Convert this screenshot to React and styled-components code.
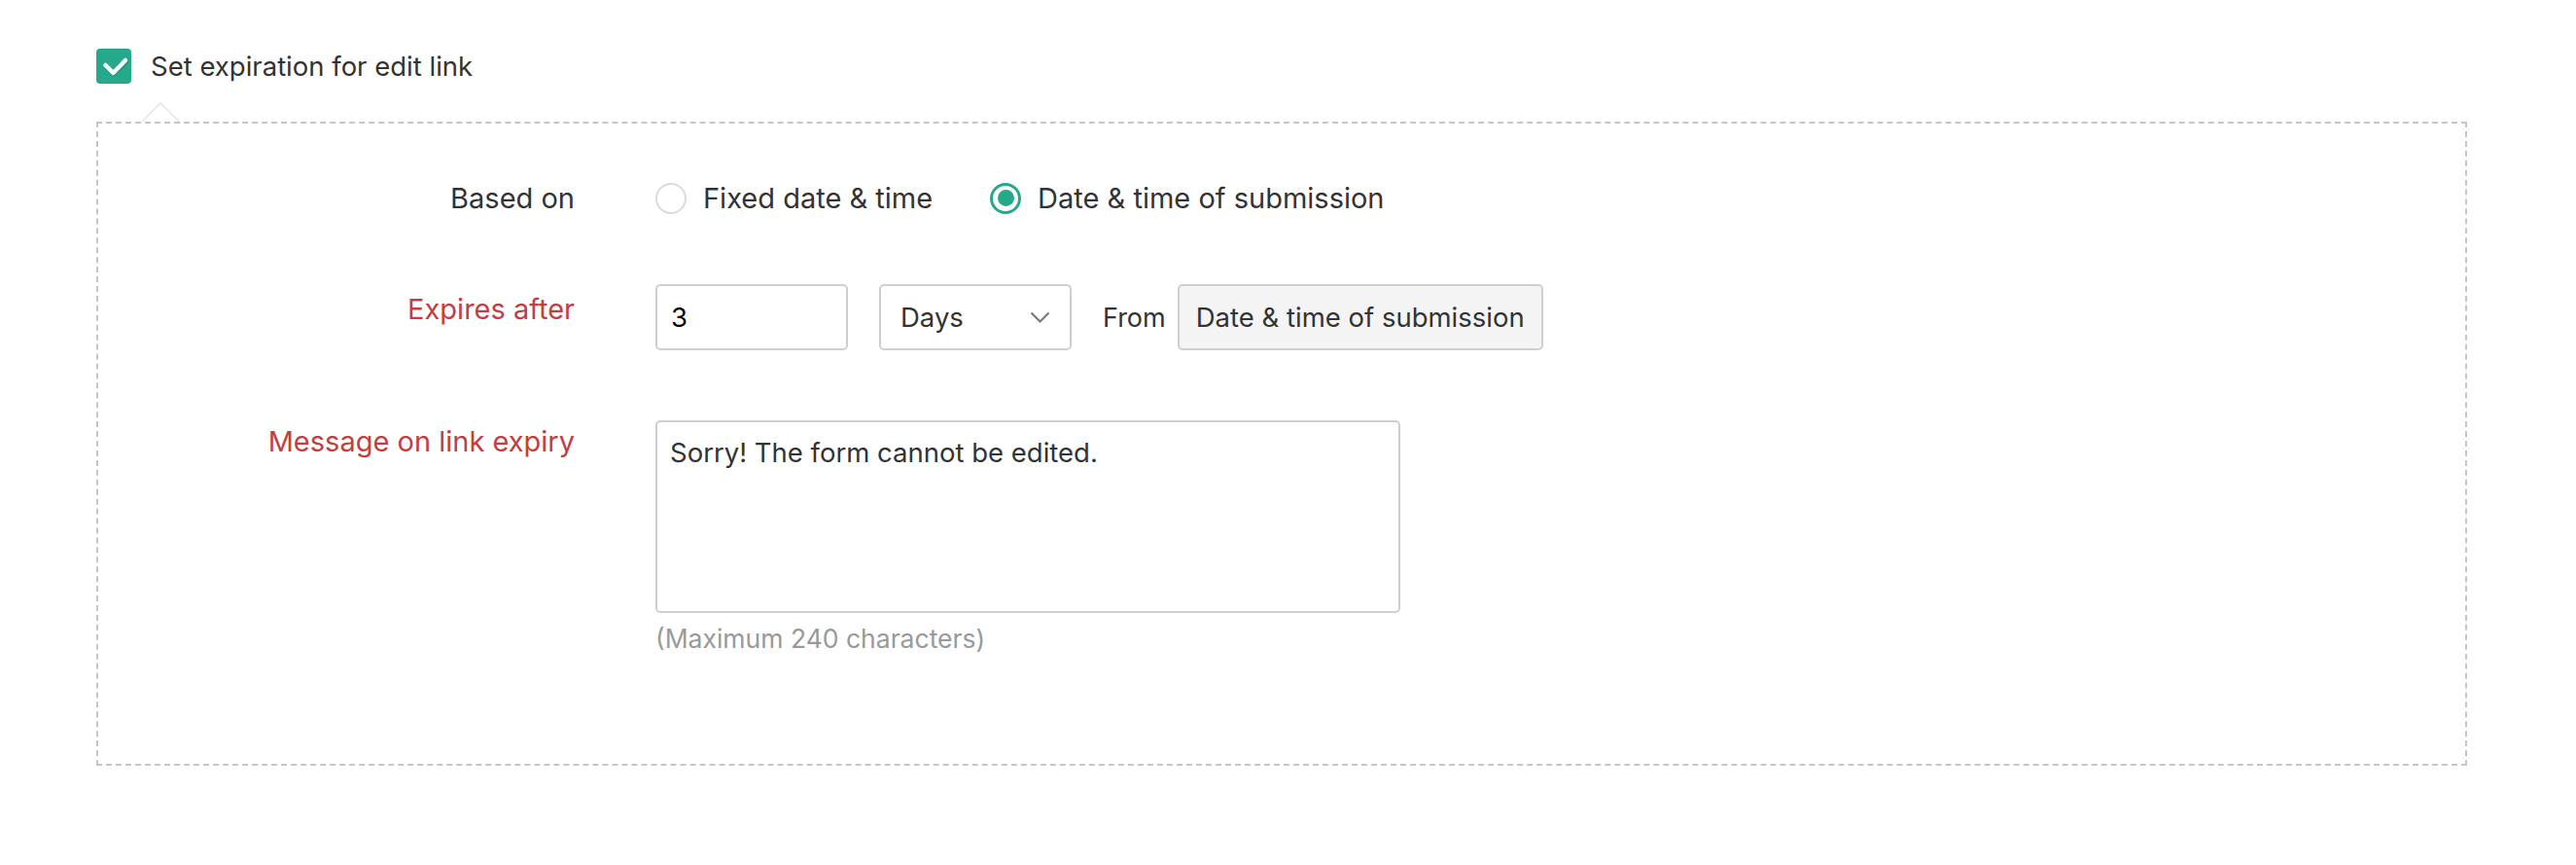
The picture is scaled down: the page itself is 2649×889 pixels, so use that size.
import React from "react";
import styled, { createGlobalStyle } from "styled-components";

const Global = createGlobalStyle`
  html, body { margin: 0; padding: 0; background: #fff; }
  body { font-family: Inter, "Noto Sans", sans-serif; color: #333; }
`;

const Page = styled.div`
  padding: 50px 112px 40px 99px;
`;

const Header = styled.label`
  display: flex;
  align-items: center;
  gap: 20px;
  font-size: 27.5px;
  color: #333;
  height: 36px;
`;

const CheckBox = styled.span`
  width: 36px;
  height: 36px;
  border-radius: 4px;
  background: #26a98a;
  display: flex;
  align-items: center;
  justify-content: center;
`;

const Panel = styled.div`
  position: relative;
  margin-top: 39px;
  border: 2px dashed #c6c6c6;
  padding: 59px 0 113px 0;
  display: flex;
  flex-direction: column;
`;

const Notch = styled.span`
  position: absolute;
  top: -22px;
  left: 44px;
  width: 0;
  height: 0;
  border-left: 20px solid transparent;
  border-right: 20px solid transparent;
  border-bottom: 20px solid #e4e4e4;
  &::after {
    content: "";
    position: absolute;
    left: -18px;
    top: 2px;
    border-left: 18px solid transparent;
    border-right: 18px solid transparent;
    border-bottom: 18px solid #fff;
  }
`;

const Row = styled.div`
  display: flex;
  align-items: ${(p) => (p.$center ? "center" : "flex-start")};
  margin-top: ${(p) => p.$mt || 0}px;
`;

const Label = styled.div`
  width: 490px;
  flex: none;
  text-align: right;
  font-size: 29px;
  color: ${(p) => (p.$req ? "#c1403f" : "#333")};
  padding-top: ${(p) => p.$pt || 0}px;
`;

const Controls = styled.div`
  margin-left: 83px;
  display: flex;
  align-items: center;
`;

const RadioItem = styled.label`
  display: flex;
  align-items: center;
  gap: 17px;
  font-size: 29px;
  color: #333;
  margin-right: 59px;
`;

const RadioCircle = styled.span`
  width: 32px;
  height: 32px;
  box-sizing: border-box;
  border-radius: 50%;
  border: ${(p) => (p.$on ? "3px solid #26a98a" : "2px solid #dadada")};
  display: flex;
  align-items: center;
  justify-content: center;
  &::after {
    content: "";
    display: ${(p) => (p.$on ? "block" : "none")};
    width: 17px;
    height: 17px;
    border-radius: 50%;
    background: #26a98a;
  }
`;

const Field = styled.div`
  box-sizing: border-box;
  flex: none;
  height: 68px;
  width: ${(p) => p.$w}px;
  border: 2px solid #cfcfcf;
  border-radius: 5px;
  background: ${(p) => (p.$gray ? "#f4f4f4" : "#fff")};
  display: flex;
  align-items: center;
  justify-content: ${(p) => (p.$gray ? "center" : "space-between")};
  padding: 0 ${(p) => (p.$gray ? 10 : 20)}px 0 ${(p) => (p.$gray ? 10 : p.$dark ? 14 : 20)}px;
  white-space: nowrap;
  font-size: 27.5px;
  color: ${(p) => (p.$dark ? "#000" : "#333")};
  margin-right: ${(p) => p.$mr || 0}px;
`;

const FromText = styled.span`
  font-size: 27px;
  color: #333;
  margin-right: 12px;
`;

const Column = styled.div`
  margin-left: 83px;
  display: flex;
  flex-direction: column;
`;

const TextArea = styled.div`
  box-sizing: border-box;
  width: 766px;
  height: 198px;
  border: 2px solid #cfcfcf;
  border-radius: 5px;
  padding: 14px 13px;
  font-size: 27.5px;
  color: #333;
`;

const Hint = styled.div`
  margin-top: 10px;
  font-size: 26.5px;
  color: #999;
`;

export default function App() {
  return (
    <>
      <Global />
      <Page>
        <Header>
          <CheckBox>
            <svg width="36" height="36" viewBox="0 0 36 36" fill="none">
              <path d="M10.5 18.5l7.5 7.5L31 13" stroke="#1d8a70" strokeWidth="4.5" strokeLinecap="round" strokeLinejoin="round" />
              <path d="M9.5 17l8 8L30 12" stroke="#fff" strokeWidth="4.5" strokeLinecap="round" strokeLinejoin="round" />
            </svg>
          </CheckBox>
          Set expiration for edit link
        </Header>
        <Panel>
          <Notch />
          <Row $center>
            <Label>Based on</Label>
            <Controls>
              <RadioItem>
                <RadioCircle />
                Fixed date &amp; time
              </RadioItem>
              <RadioItem>
                <RadioCircle $on />
                Date &amp; time of submission
              </RadioItem>
            </Controls>
          </Row>
          <Row $mt={71}>
            <Label $req $pt={8}>Expires after</Label>
            <Controls>
              <Field $w={198} $mr={32} $dark>3</Field>
              <Field $w={198} $mr={32}>
                Days
                <svg width="21" height="12" viewBox="0 0 21 12" fill="none">
                  <path d="M1.5 1.5l9 9 9-9" stroke="#777" strokeWidth="2" />
                </svg>
              </Field>
              <FromText>From</FromText>
              <Field $w={376} $gray>Date &amp; time of submission</Field>
            </Controls>
          </Row>
          <Row $mt={72}>
            <Label $req $pt={4}>Message on link expiry</Label>
            <Column>
              <TextArea>Sorry! The form cannot be edited.</TextArea>
              <Hint>(Maximum 240 characters)</Hint>
            </Column>
          </Row>
        </Panel>
      </Page>
    </>
  );
}
